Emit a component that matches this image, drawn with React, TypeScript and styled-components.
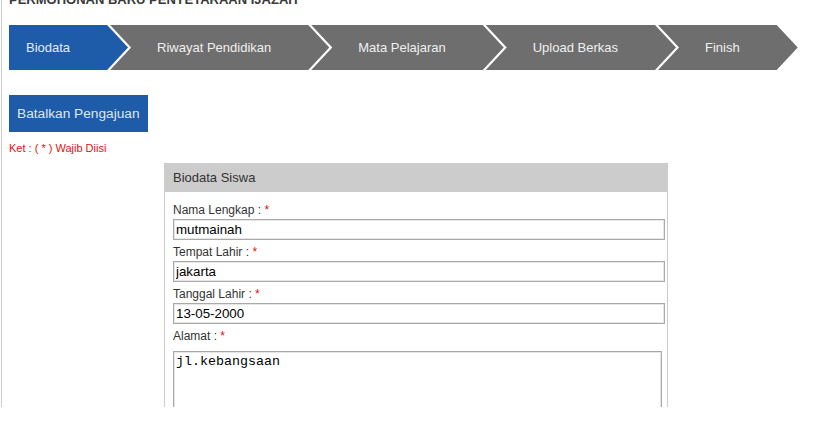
import React from 'react';
import styled, { createGlobalStyle } from 'styled-components';

const colors = {
    blue: '#1e5ba8',
    stepGray: '#6e6e6e',
    border: '#cccccc',
    red: '#e01010',
    text: '#333333',
};

const GlobalStyle = createGlobalStyle`
    body {
        margin: 0;
        background: #ffffff;
        font-family: "Liberation Sans", Arial, sans-serif;
    }
`;

const StyledPage = styled.div`
    margin-left: 1px;
    width: 827px;
    height: 407px;
    overflow: hidden;
    border-left: 1px solid ${colors.border};
    border-right: 1px solid ${colors.border};
    padding-left: 7px;
`;

const StyledTitle = styled.h2`
    margin: -8px 0 0;
    font-size: 13px;
    line-height: 15px;
    font-weight: bold;
    color: #3a3a3a;
`;

const StyledSteps = styled.div`
    display: flex;
    margin-top: 18px;
    height: 45px;
`;

interface StepProps {
    $active: boolean;
    $first: boolean;
}

const StyledStep = styled.div<StepProps>`
    height: 45px;
    line-height: 45px;
    font-size: 13px;
    white-space: nowrap;
    background: ${(props) => (props.$active ? colors.blue : colors.stepGray)};
    color: ${(props) => (props.$active ? '#e2ebf6' : '#f0f0f0')};
    padding: 0 58px 0 ${(props) => (props.$first ? '17px' : '47px')};
    margin-left: ${(props) => (props.$first ? '0' : '-18px')};
    clip-path: ${(props) =>
        props.$first
            ? 'polygon(0 0, calc(100% - 21px) 0, 100% 50%, calc(100% - 21px) 100%, 0 100%)'
            : 'polygon(0 0, calc(100% - 21px) 0, 100% 50%, calc(100% - 21px) 100%, 0 100%, 21px 50%)'};
`;

const StyledCancelButton = styled.button`
    display: block;
    margin-top: 25px;
    height: 37px;
    padding: 0 8px;
    border: none;
    background: ${colors.blue};
    color: #dce7f5;
    font-family: "Liberation Sans", Arial, sans-serif;
    font-size: 13.7px;
`;

const StyledNote = styled.div`
    margin-top: 10px;
    font-size: 11px;
    line-height: 13px;
    color: ${colors.red};
`;

const StyledPanel = styled.div`
    width: 504px;
    margin: 8px 0 0 155px;
`;

const StyledPanelHeader = styled.div`
    height: 29px;
    line-height: 29px;
    padding-left: 9px;
    background: ${colors.border};
    color: ${colors.text};
    font-size: 13px;
`;

const StyledPanelBody = styled.div`
    border-left: 1px solid ${colors.border};
    border-right: 1px solid ${colors.border};
    padding: 6px 2px 40px 8px;
`;

const StyledLabel = styled.label`
    display: block;
    padding-top: 3px;
    font-size: 12px;
    line-height: 18px;
    color: ${colors.text};
`;

const StyledRequired = styled.span`
    color: ${colors.red};
`;

const StyledInput = styled.input`
    display: block;
    box-sizing: border-box;
    width: 492px;
    height: 21px;
    margin: 0;
    padding: 0 2px;
    border: 1px solid #aaaaaa;
    box-shadow: inset 0 0 0 1px #e6e6e6;
    font-family: "Liberation Sans", Arial, sans-serif;
    font-size: 13.33px;
    color: #000;
`;

const StyledTextArea = styled.textarea`
    display: block;
    box-sizing: border-box;
    width: 489px;
    height: 90px;
    margin: 6px 0 0;
    padding: 2px;
    border: 1px solid #aaaaaa;
    box-shadow: inset 0 0 0 1px #e6e6e6;
    font-family: "Liberation Mono", "Courier New", monospace;
    font-size: 13.33px;
    color: #000;
    resize: none;
`;

const steps = ['Biodata', 'Riwayat Pendidikan', 'Mata Pelajaran', 'Upload Berkas', 'Finish'];

const fields = [
    { label: 'Nama Lengkap', value: 'mutmainah' },
    { label: 'Tempat Lahir', value: 'jakarta' },
    { label: 'Tanggal Lahir', value: '13-05-2000' },
];

function App() {
    return (
        <>
            <GlobalStyle />
            <StyledPage>
                <StyledTitle>PERMOHONAN BARU PENYETARAAN IJAZAH</StyledTitle>
                <StyledSteps>
                    {steps.map((step, i) => (
                        <StyledStep key={step} $active={i === 0} $first={i === 0}>
                            {step}
                        </StyledStep>
                    ))}
                </StyledSteps>
                <StyledCancelButton>Batalkan Pengajuan</StyledCancelButton>
                <StyledNote>Ket : ( * ) Wajib Diisi</StyledNote>
                <StyledPanel>
                    <StyledPanelHeader>Biodata Siswa</StyledPanelHeader>
                    <StyledPanelBody>
                        {fields.map((field) => (
                            <React.Fragment key={field.label}>
                                <StyledLabel>
                                    {field.label} : <StyledRequired>*</StyledRequired>
                                </StyledLabel>
                                <StyledInput defaultValue={field.value} />
                            </React.Fragment>
                        ))}
                        <StyledLabel>
                            Alamat : <StyledRequired>*</StyledRequired>
                        </StyledLabel>
                        <StyledTextArea defaultValue="jl.kebangsaan" />
                    </StyledPanelBody>
                </StyledPanel>
            </StyledPage>
        </>
    );
}

export default App;
